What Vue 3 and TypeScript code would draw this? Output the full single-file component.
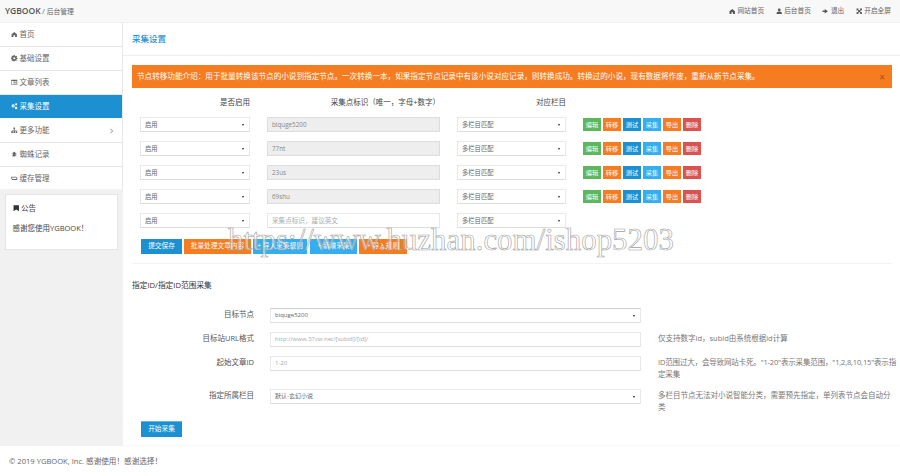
<script setup lang="ts">
interface NavItem { label: string; icon: string; active?: boolean; arrow?: boolean }
interface NodeRow { status: string; code: string; column: string; placeholder?: boolean; disabled: boolean }

const nav: NavItem[] = [
  { label: '首页', icon: 'M1 6 6 2l5 4v5H7.5V8h-3v3H1z' },
  { label: '基础设置', icon: 'M5 0h2l.3 1.700 1.200.5L10 1.300 11.200 2.500 10.300 4l.5 1.200 1.200.3v2l-1.700.3-.5 1.200.9 1.500L9.500 11.200 8 10.300l-.9.4L6.800 12h-2l-.3-1.300-1-.4L2 11.200.8 10l.9-1.500-.5-1.200L0 7V5l1.300-.3.5-1.200L.9 2 2.100.8l1.500.9 1-.4zM6 4a2 2 0 1 0 0 4 2 2 0 0 0 0-4z' },
  { label: '文章列表', icon: 'M0.500 1.500h11v9h-11zM1.500 3.500v6h3.500v-6zM6 3.500v1.500h4.500V3.500zM6 6v1h4.500V6zM6 8v1.500h4.500V8z' },
  { label: '采集设置', icon: 'M4 2.500a3 3 0 1 1 0 6 3 3 0 0 1 0-6zM4 4.500a1 1 0 1 0 0 2 1 1 0 0 0 0-2zM9.500 .5a2 2 0 1 1 0 4 2 2 0 0 1 0-4zM9.500 7a2.200 2.200 0 1 1 0 4.400 2.200 2.200 0 0 1 0-4.400z', active: true },
  { label: '更多功能', icon: 'M4.500 1h3v3h-1v1.500H10V8h1.500v3h-3V8h.7V6.500H6.500V8h1v3h-3V8h1V6.500H2.800V8h.7v3h-3V8H2V5.500h3.500V4h-1z', arrow: true },
  { label: '蜘蛛记录', icon: 'M6 1.500a2 2 0 0 1 2 2v.7l2-1 .4.8L8.300 5.200v1.200l2.200.4-.1.900-2.100-.4v.7l1.700 1.600-.6.600-1.500-1.400A2.500 2.500 0 0 1 6 10.500a2.500 2.500 0 0 1-1.900-1.200L2.600 10.700 2 10.100l1.700-1.600v-.7L1.600 8.200 1.500 7.300l2.200-.4V5.200L1.600 4l.4-.8 2 1v-.7a2 2 0 0 1 2-2z' },
  { label: '缓存管理', icon: 'M0.500 3h8.500l2.500 2v4H3L.5 7zM2 4.500v2l1.500 1H10V5.700l-1.500-1.200z' }
]

const rows: NodeRow[] = [
  { status: '启用', code: 'biquge5200', column: '多栏目匹配', disabled: true },
  { status: '启用', code: '77nt', column: '多栏目匹配', disabled: true },
  { status: '启用', code: '23us', column: '多栏目匹配', disabled: true },
  { status: '启用', code: '69shu', column: '多栏目匹配', disabled: true },
  { status: '启用', code: '采集点标识，建议英文', column: '多栏目匹配', placeholder: true, disabled: false }
]

const rowActions = [
  { label: '编辑', cls: 'green' },
  { label: '转移', cls: 'orange' },
  { label: '测试', cls: 'blue' },
  { label: '采集', cls: 'sky' },
  { label: '导出', cls: 'orange' },
  { label: '删除', cls: 'red' }
]

const topLinks = [
  { label: '网站首页', icon: 'M1 6 6 2l5 4v5H7.500V8h-3v3H1z' },
  { label: '后台首页', icon: 'M6 1a2.500 2.500 0 1 1 0 5 2.500 2.500 0 0 1 0-5zM1 11c0-3 1.500-4.500 5-4.500s5 1.500 5 4.500z' },
  { label: '退出', icon: 'M1 4.500h4V2l6 4-6 4V7.500H1z' },
  { label: '开启全屏', icon: 'M1 1h4L3.800 2.200 6 4.500l2.200-2.300L7 1h4v4L9.800 3.800 7.500 6l2.300 2.200L11 7v4H7l1.200-1.200L6 7.500 3.800 9.800 5 11H1V7l1.200 1.200L4.500 6 2.200 3.800 1 5z' }
]
</script>

<template>
  <div class="page">
    <header class="topbar">
      <div class="brand"><b>YGBOOK</b> / <span>后台管理</span></div>
      <nav class="top-links">
        <a v-for="l in topLinks" :key="l.label" class="top-link">
          <svg viewBox="0 0 12 12" class="ico"><path :d="l.icon" fill="#555" fill-rule="evenodd" /></svg>{{ l.label }}
        </a>
      </nav>
    </header>

    <div class="body">
      <aside class="side">
        <ul class="menu">
          <li v-for="n in nav" :key="n.label" class="menu-item" :class="{ active: n.active }">
            <svg viewBox="0 0 12 12" class="ico"><path :d="n.icon" fill="currentColor" fill-rule="evenodd" /></svg>
            <span>{{ n.label }}</span>
            <svg v-if="n.arrow" viewBox="0 0 6 8" class="arrow"><path d="M1.500 1 4.500 4l-3 3" fill="none" stroke="#666" stroke-width="1" /></svg>
          </li>
        </ul>
        <section class="notice">
          <div class="notice-title">
            <svg viewBox="0 0 12 12" class="ico"><path d="M1 .5h10v11L6 8.500 1 11.500z" fill="#333" /></svg>公告
          </div>
          <p>感谢您使用YGBOOK！</p>
        </section>
      </aside>

      <main class="main">
        <h1 class="title">采集设置</h1>
        <div class="content">
          <div class="alert">
            <span>节点转移功能介绍：用于批量转换该节点的小说到指定节点。一次转换一本，如果指定节点记录中有该小说对应记录，则转换成功。转换过的小说，现有数据将作废，重新从新节点采集。</span>
            <span class="close">×</span>
          </div>

          <div class="grid head">
            <div>是否启用</div>
            <div>采集点标识（唯一，字母+数字）</div>
            <div>对应栏目</div>
            <div></div>
          </div>

          <div v-for="r in rows" :key="r.code" class="grid row">
            <div class="field select">{{ r.status }}<i class="caret"></i></div>
            <div class="field" :class="{ disabled: r.disabled, ph: r.placeholder }">{{ r.code }}</div>
            <div class="field select">{{ r.column }}<i class="caret"></i></div>
            <div class="actions">
              <template v-if="r.disabled">
                <button v-for="a in rowActions" :key="a.label" class="mini" :class="a.cls">{{ a.label }}</button>
              </template>
            </div>
          </div>

          <div class="toolbar">
            <button class="btn blue w41">提交保存</button>
            <button class="btn orange w67">批量处理文章内容</button>
            <button class="btn sky w54">+ 导入采集规则</button>
            <button class="btn sky w47 gap">+ 新增采集</button>
            <button class="btn orange w48">+ 导入规则</button>
          </div>

          <div class="sep"></div>
          <h2 class="sub">指定ID/指定ID范围采集</h2>

          <div class="form">
            <div class="form-row">
              <label>目标节点</label>
              <div class="field select strong">biquge5200<i class="caret"></i></div>
              <p></p>
            </div>
            <div class="form-row">
              <label>目标站URL格式</label>
              <div class="field ph">http://www.37zw.net/[subid]/[id]/</div>
              <p>仅支持数字id，subid由系统根据id计算</p>
            </div>
            <div class="form-row r3">
              <label>起始文章ID</label>
              <div class="field ph">1-20</div>
              <p>ID范围过大，会导致网站卡死。"1-20"表示采集范围，"1,2,8,10,15"表示指定采集</p>
            </div>
            <div class="form-row r4">
              <label>指定所属栏目</label>
              <div class="field select">默认-玄幻小说<i class="caret"></i></div>
              <p>多栏目节点无法对小说智能分类，需要预先指定，单列表节点会自动分类</p>
            </div>
          </div>

          <button class="btn blue w41 start">开始采集</button>
        </div>
      </main>
    </div>

    <footer class="foot">© 2019 YGBOOK, Inc. 感谢使用！感谢选择！</footer>

    <div class="watermark">https://www.huzhan.com/ishop5203</div>
  </div>
</template>

<style>
html, body { margin: 0; background: #fff; }
</style>

<style scoped>
.page {
  position: relative;
  width: 900px;
  height: 476px;
  overflow: hidden;
  background: #fff;
  color: #555;
  font: 7.500px/1.2 "Open Sans", "Noto Sans CJK SC", sans-serif;
}
.topbar {
  height: 23px;
  box-sizing: border-box;
  display: flex;
  align-items: center;
  justify-content: space-between;
  padding: 0 9px 0 5px;
  background: #f8f8f8;
  border-bottom: 1px solid #eee;
}
.brand { font-size: 6.800px; color: #666; }
.brand b { font-size: 8.500px; font-weight: 600; color: #555; }
.top-links { display: flex; gap: 11.500px; }
.top-link { display: flex; align-items: center; gap: 2px; color: #666; font-size: 6.700px; }
.ico { width: 6.500px; height: 6.500px; flex: none; }
.body { display: flex; height: 423px; }
.side {
  width: 123px;
  flex: none;
  background: #f1f1f1;
}
.menu {
  list-style: none;
  margin: 0;
  padding: 0;
  background: #fff;
  border-right: 1px solid #e7e7e7;
}
.menu-item {
  height: 23px;
  margin-bottom: 1px;
  box-shadow: 0 1px 0 #e5e5e5;
  padding-left: 11px;
  display: flex;
  align-items: center;
  gap: 2px;
  color: #666;
  font-size: 7.500px;
}
.menu-item:last-child { height: 22px; margin-bottom: 0; box-shadow: none; }
.menu-item.active { background: #1c90d0; color: #fff; box-shadow: none; }
.arrow { width: 5px; height: 6px; margin-left: auto; margin-right: 8px; }
.notice {
  width: 113px;
  height: 56px;
  box-sizing: border-box;
  margin: 5px 0 0 4.500px;
  padding: 9px 7px;
  background: #fff;
  border: 1px solid #e4e4e4;
  color: #444;
}
.notice-title { display: flex; align-items: center; gap: 2px; font-size: 7.500px; }
.notice p { margin: 11px 0 0; font-size: 7.500px; }
.main { flex: 1; min-width: 0; border-bottom: 1px solid #f8f8f8; }
.title {
  height: 33px;
  box-sizing: border-box;
  margin: 0;
  padding: 11px 0 0 9px;
  border-bottom: 1px solid #eee;
  font-size: 8.500px;
  font-weight: 500;
  color: #1c90d0;
}
.content { padding: 9px 8px 0 9px; }
.alert {
  height: 23px;
  box-sizing: border-box;
  padding: 0 6px 0 5px;
  display: flex;
  align-items: center;
  justify-content: space-between;
  background: #f57c20;
  color: #fff;
  font-size: 7.600px;
  white-space: nowrap;
}
.close { color: #a5521a; font-size: 10px; margin-right: 1px; }
.grid {
  display: grid;
  grid-template-columns: 110px 173px 109px 1fr;
  column-gap: 17px;
  padding-left: 8px;
}
.head { height: 29px; align-items: center; color: #444; text-align: right; font-size: 7.500px; }
.row { height: 24px; align-items: start; }
.field {
  height: 15px;
  box-sizing: border-box;
  padding: 0 4px;
  display: flex;
  align-items: center;
  justify-content: space-between;
  background: #fff;
  border: 1px solid #e9e9e9;
  border-bottom: 1px solid #ddd;
  color: #777;
  font-size: 6.300px;
  white-space: nowrap;
}
.field.select { color: #666; }
.field.disabled { background: #eee; border-color: #ddd; color: #888; }
.field.ph { color: #aaa; }
.row .field.ph { font-size: 6.600px; }
.field.strong { color: #666; border-top-color: #ccc; }
.caret {
  width: 0;
  height: 0;
  margin-right: 1px;
  border-left: 1.500px solid transparent;
  border-right: 1.500px solid transparent;
  border-top: 2px solid #222;
}
.actions { display: flex; gap: 2px; }
button { border: 0; padding: 0; margin: 0; color: #fff; font: inherit; white-space: nowrap; overflow: hidden; }
.mini { width: 18px; height: 13px; font-size: 6.200px; margin-top: 1px; }
.green { background: #5cb85c; }
.orange { background: #f57c20; }
.blue { background: #1c90d0; }
.sky { background: #35aef0; }
.red { background: #d9534f; }
.toolbar { display: flex; gap: 2px; padding-left: 9px; margin-top: 2px; }
.btn { height: 15px; font-size: 6.700px; }
.w41 { width: 41px; }
.w67 { width: 67px; }
.w54 { width: 54px; }
.w47 { width: 47px; }
.w48 { width: 48px; }
.gap { margin-left: 1px; }
.sep { height: 1px; background: #f3f3f3; margin-top: 9px; }
.sub { margin: 16px 0 0; font-size: 7.700px; font-weight: 400; color: #333; line-height: 11px; }
.form { margin-top: 17px; }
.form-row {
  display: grid;
  grid-template-columns: 122px 371px 239px;
  column-gap: 16px;
  height: 24px;
}
.form-row label { text-align: right; color: #555; font-size: 7.500px; line-height: 13px; }
.form-row p { margin: 0 0 0 1px; color: #777; font-size: 7.500px; line-height: 12px; }
.form-row .field { font-size: 6px; }
.r3 { height: 33px; }
.r3 p { letter-spacing: -0.16px; }
.r4 { height: 32px; }
.start { display: block; margin-left: 9px; height: 16px; border-top: 1px solid #5fb5e5; }
.foot {
  box-sizing: border-box;
  padding: 11px 0 0 9px;
  color: #666;
  font-size: 7.600px;
}
.watermark {
  position: absolute;
  left: 228px;
  top: 220px;
  font: 400 30.900px/40px "Liberation Serif", serif;
  color: rgba(255, 255, 255, 0.5);
  -webkit-text-stroke: 0.6px #a0a0a0;
  white-space: nowrap;
  pointer-events: none;
}
</style>
